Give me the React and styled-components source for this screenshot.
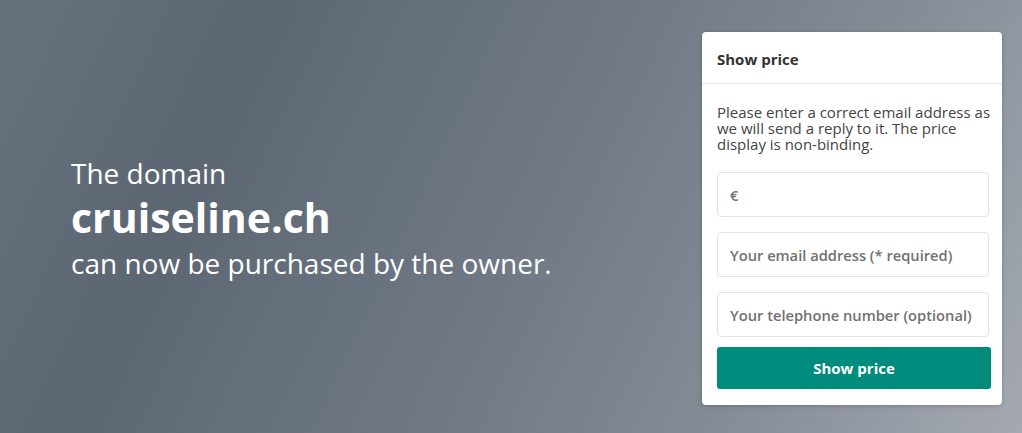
import styled, { createGlobalStyle } from 'styled-components';

const GlobalStyle = createGlobalStyle`
  html, body {
    margin: 0;
    padding: 0;
  }
  body {
    font-family: "Open Sans", "Noto Sans", sans-serif;
  }
`;

const Page = styled.main`
  width: 1022px;
  height: 433px;
  display: flex;
  justify-content: space-between;
  align-items: flex-start;
  background: linear-gradient(115deg, #67707d 0%, #5d6774 22%, #6f7784 50%, #858c96 75%, #a4a9b1 100%);
  overflow: hidden;
`;

const Intro = styled.section`
  align-self: center;
  padding: 2px 0 0 71px;
  color: #fff;
`;

const Lead = styled.div`
  font-size: 28px;
  font-weight: 400;
  line-height: 38px;
`;

const Domain = styled.h1`
  margin: 0 0 2px;
  font-size: 41px;
  font-weight: 700;
  line-height: 50px;
`;

const Card = styled.aside`
  width: 300px;
  margin: 32px 20px 0 0;
  background: #fff;
  border-radius: 4px;
  box-shadow: 0 1px 4px rgba(0, 0, 0, 0.2);
`;

const CardHeader = styled.h2`
  margin: 0;
  padding: 18px 15px 15px;
  font-size: 15px;
  font-weight: 700;
  line-height: 18px;
  color: #333;
  border-bottom: 1px solid #e6e6e6;
`;

const CardBody = styled.form`
  display: flex;
  flex-direction: column;
  padding: 20px 4px 16px 15px;
`;

const Note = styled.p`
  margin: 0 0 20px;
  font-size: 15px;
  line-height: 16px;
  color: #444;
`;

const Field = styled.input`
  box-sizing: border-box;
  width: 272px;
  height: 45px;
  margin-bottom: 15px;
  padding: 0 12px;
  border: 1px solid #e3e3e3;
  border-radius: 4px;
  font-family: inherit;
  font-size: 14.7px;
  font-weight: 600;
  color: #333;
  outline: none;

  &::placeholder {
    color: #717171;
  }

  &:last-of-type {
    margin-bottom: 10px;
  }
`;

const Submit = styled.button`
  width: 274px;
  height: 42px;
  border: 0;
  border-radius: 3px;
  background: #008c7c;
  color: #fff;
  font-family: inherit;
  font-size: 15px;
  font-weight: 700;
  cursor: pointer;
`;

const fields = [
  { type: 'text', placeholder: '€' },
  { type: 'email', placeholder: 'Your email address (* required)' },
  { type: 'tel', placeholder: 'Your telephone number (optional)' },
];

export default function App() {
  return (
    <>
      <GlobalStyle />
      <Page>
        <Intro>
          <Lead>The domain</Lead>
          <Domain>cruiseline.ch</Domain>
          <Lead>can now be purchased by the owner.</Lead>
        </Intro>
        <Card>
          <CardHeader>Show price</CardHeader>
          <CardBody onSubmit={(e) => e.preventDefault()}>
            <Note>
              Please enter a correct email address as we will send a reply to it. The price
              display is non-binding.
            </Note>
            {fields.map((f) => (
              <Field key={f.type} type={f.type} placeholder={f.placeholder} />
            ))}
            <Submit type="submit">Show price</Submit>
          </CardBody>
        </Card>
      </Page>
    </>
  );
}
